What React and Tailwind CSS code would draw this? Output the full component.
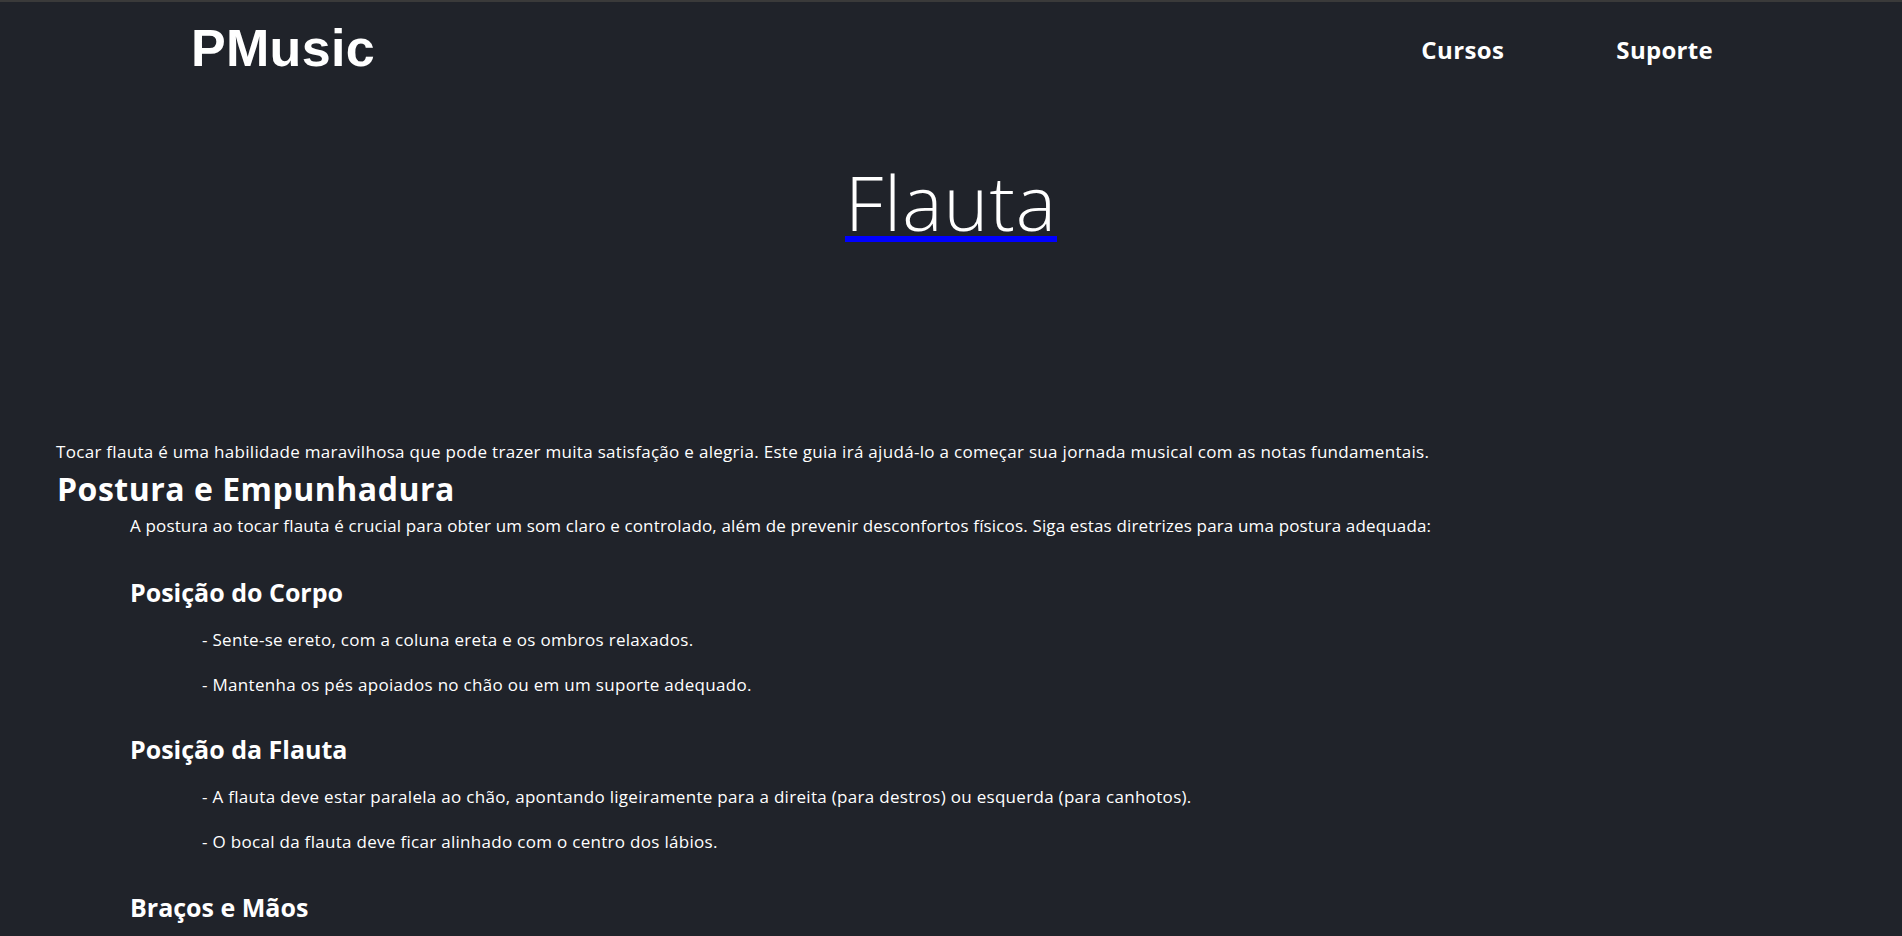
import React from "react";

const body = { fontFamily: '"Open Sans", "Liberation Sans", sans-serif' };

function Item({ children, className = "mt-[21px]" }) {
  return (
    <p className={"pl-[202px] text-[17px] leading-[24px] tracking-[0.3px] text-white " + className} style={body}>
      {children}
    </p>
  );
}

function H3({ children, className = "" }) {
  return (
    <h3 className={"pl-[130px] text-[25px] leading-[32px] font-bold text-white " + className} style={body}>
      {children}
    </h3>
  );
}

export default function App() {
  return (
    <div className="min-h-[936px] w-full bg-[#20232a] border-t-2 border-[#3a3a3a] overflow-hidden">
      <header className="flex items-start pl-[191px] pr-[189px] pt-[19px]">
        <div
          className="text-[52px] leading-[55px] font-bold tracking-[0.3px] text-white"
          style={{ fontFamily: '"Liberation Sans", Arial, sans-serif' }}
        >
          PMusic
        </div>
        <nav className="ml-auto flex gap-[112px] pt-[14px]">
          <a className="text-[24px] leading-[30px] font-bold tracking-[0.4px] text-white" style={body}>Cursos</a>
          <a className="text-[24px] leading-[30px] font-bold tracking-[0.3px] text-white" style={body}>Suporte</a>
        </nav>
      </header>

      <div className="flex justify-center mt-[91px]">
        <h1
          className="inline-block text-[76px] leading-[69px] font-light tracking-[1px] text-white border-b-[6px] border-[#0000ff]"
          style={body}
        >
          Flauta
        </h1>
      </div>

      <main className="pl-[56px] mt-[198px]">
        <p className="text-[17px] leading-[24px] tracking-[0.3px] text-white" style={body}>
          Tocar flauta é uma habilidade maravilhosa que pode trazer muita satisfação e alegria. Este guia irá ajudá-lo a começar sua jornada musical com as notas fundamentais.
        </p>
      </main>
      <h2 className="pl-[57px] mt-[7px] text-[32px] leading-[36px] font-bold tracking-[0.5px] text-white" style={body}>
        Postura e Empunhadura
      </h2>
      <p className="pl-[130px] mt-[7px] text-[17px] leading-[24px] tracking-[0.15px] text-white" style={body}>
        A postura ao tocar flauta é crucial para obter um som claro e controlado, além de prevenir desconfortos físicos. Siga estas diretrizes para uma postura adequada:
      </p>

      <H3 className="mt-[38px]">Posição do Corpo</H3>
      <Item className="mt-[20px]">- Sente-se ereto, com a coluna ereta e os ombros relaxados.</Item>
      <Item>- Mantenha os pés apoiados no chão ou em um suporte adequado.</Item>

      <H3 className="mt-[36px]">Posição da Flauta</H3>
      <Item className="mt-[20px]">- A flauta deve estar paralela ao chão, apontando ligeiramente para a direita (para destros) ou esquerda (para canhotos).</Item>
      <Item>- O bocal da flauta deve ficar alinhado com o centro dos lábios.</Item>

      <H3 className="mt-[37px]">Braços e Mãos</H3>
      <div className="h-[40px]" />
    </div>
  );
}
